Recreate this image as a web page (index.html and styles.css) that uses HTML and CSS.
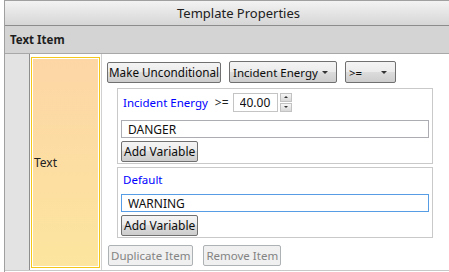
FILE: index.html
```html
<!DOCTYPE html>
<html lang="en">
<head>
    <meta charset="UTF-8">
    <meta name="viewport" content="width=device-width, initial-scale=1.0">
    <title>Template Properties</title>
    <link rel="stylesheet" href="styles.css">
</head>
<body>
    <div class="panel">
        <div class="panel-title">Template Properties</div>
        <div class="section-title">Text Item</div>
        <div class="item-row">
            <div class="gutter"></div>
            <div class="item-cell">
                <div class="item-label">Text</div>
            </div>
            <div class="editor">
                <div class="toolbar">
                    <button class="btn">Make Unconditional</button>
                    <div class="combo combo-wide">Incident Energy <span class="arrow"></span></div>
                    <div class="combo combo-narrow">&gt;= <span class="arrow"></span></div>
                </div>

                <div class="case">
                    <div class="case-head">
                        <span class="case-name">Incident Energy</span>
                        <span class="op">&gt;=</span>
                        <div class="numeric">
                            <input type="text" class="num-input" value="40.00">
                            <div class="spinner">
                                <span class="spin up"></span>
                                <span class="spin down"></span>
                            </div>
                        </div>
                    </div>
                    <input type="text" class="text-input" value="DANGER">
                    <button class="btn btn-small">Add Variable</button>
                </div>

                <div class="case">
                    <div class="case-head short">
                        <span class="case-name">Default</span>
                    </div>
                    <input type="text" class="text-input focused" value="WARNING">
                    <button class="btn btn-small">Add Variable</button>
                </div>

                <div class="actions">
                    <button class="btn btn-disabled" disabled>Duplicate Item</button>
                    <button class="btn btn-disabled" disabled>Remove Item</button>
                </div>
            </div>
        </div>
    </div>
</body>
</html>
```

FILE: styles.css
```css
body {
    margin: 0;
    background-color: white;
    font-family: "Segoe UI", "Noto Sans", sans-serif;
    font-size: 12px;
    color: #1e1e1e;
}
.panel {
    margin-left: 4px;
    border-left: 1px solid #a0a0a0;
    border-top: 1px solid #a0a0a0;
    height: 271px;
    overflow: hidden;
}
.panel-title {
    height: 24px;
    line-height: 24px;
    padding-left: 23px;
    text-align: center;
    font-size: 13px;
    color: #202020;
    background: linear-gradient(#f3f3f3, #d6d6d6);
    border-bottom: 1px solid #8c8c8c;
}
.section-title {
    height: 27px;
    line-height: 27px;
    padding-left: 5px;
    font-weight: bold;
    font-size: 11.5px;
    background-color: #d4d4d4;
    border-bottom: 1px solid #a8a8a8;
}
.item-row {
    display: flex;
    height: 216px;
    border-bottom: 1px solid #c8c8c8;
}
.gutter {
    width: 24px;
    background-color: #e3e3e3;
    border-right: 1px solid #8e8e8e;
}
.item-cell {
    width: 69px;
    padding: 3px 1px 2px 1px;
    border-right: 1px solid #d0d0d0;
    display: flex;
}
.item-label {
    flex: 1;
    display: flex;
    align-items: center;
    padding-left: 2px;
    border: 1px solid #f5c71a;
    box-shadow: inset 0 0 0 1px white;
    background: linear-gradient(#fdd6a6, #fce59e);
    color: #222;
}
.editor {
    flex: 1;
    padding: 7px 16px 0 5px;
}
.toolbar {
    display: flex;
    align-items: center;
    gap: 8px;
}
.btn {
    font-family: inherit;
    font-size: 12px;
    color: #0c0c0c;
    height: 21px;
    padding: 0 2px;
    border: 1px solid #707070;
    border-radius: 2px;
    background: linear-gradient(#f4f4f4 0%, #ebebeb 50%, #dcdcdc 50%, #cdcdcd 100%);
    cursor: pointer;
    white-space: nowrap;
}
.toolbar .btn {
    font-size: 11.7px;
    padding: 0 1px;
}
.combo {
    box-sizing: border-box;
    height: 22px;
    padding: 0 8px 0 3px;
    font-size: 11.5px;
    color: #0c0c0c;
    border: 1px solid #707070;
    border-radius: 2px;
    background: linear-gradient(#f4f4f4 0%, #ebebeb 50%, #dcdcdc 50%, #cdcdcd 100%);
    display: flex;
    align-items: center;
    justify-content: space-between;
    white-space: nowrap;
}
.combo-wide {
    width: 108px;
}
.combo-narrow {
    width: 51px;
}
.arrow {
    width: 0;
    height: 0;
    border-left: 3px solid transparent;
    border-right: 3px solid transparent;
    border-top: 3px solid #333;
}
.case {
    margin: 5px 0 0 10px;
    padding: 0 3px 1px 3px;
    border: 1px solid #c9c9c9;
}
.case + .case {
    margin-top: 3px;
}
.case-head {
    display: flex;
    align-items: center;
    height: 27px;
    padding-left: 2px;
}
.case-head.short {
    height: 22px;
    padding-top: 1px;
    box-sizing: border-box;
}
.case-name {
    color: #0000ff;
    font-size: 11.5px;
}
.op {
    margin-left: 7px;
}
.numeric {
    display: flex;
    align-items: center;
    margin-left: 4px;
}
.num-input {
    box-sizing: border-box;
    width: 45px;
    height: 19px;
    padding: 0 0 0 6px;
    border: 1px solid #c4c4c4;
    font-family: inherit;
    font-size: 12px;
    color: #101010;
}
.spinner {
    display: flex;
    flex-direction: column;
    margin-left: 2px;
    gap: 1px;
}
.spin {
    width: 12px;
    height: 9px;
    border: 1px solid #c2c2c2;
    background: linear-gradient(#f6f6f6, #d8d8d8);
    box-sizing: border-box;
    position: relative;
}
.spin::after {
    content: "";
    position: absolute;
    left: 3px;
    top: 2px;
    border-left: 2px solid transparent;
    border-right: 2px solid transparent;
}
.up::after {
    border-bottom: 2px solid #333;
}
.down::after {
    border-top: 2px solid #333;
}
.text-input {
    display: block;
    width: 100%;
    box-sizing: border-box;
    height: 18px;
    margin-top: 4px;
    padding: 0 6px;
    border: 1px solid #abadb3;
    font-family: inherit;
    font-size: 12px;
    color: #101010;
}
.focused {
    border-color: #569de5;
}
.btn-small {
    display: block;
    margin-top: 3px;
    height: 21px;
}
.actions {
    display: flex;
    gap: 10px;
    margin: 7px 0 0 1px;
}
.btn-disabled {
    font-size: 11.5px;
    color: #838383;
    border-color: #adb2b5;
    background: #f0f0f0;
    cursor: default;
}
```
